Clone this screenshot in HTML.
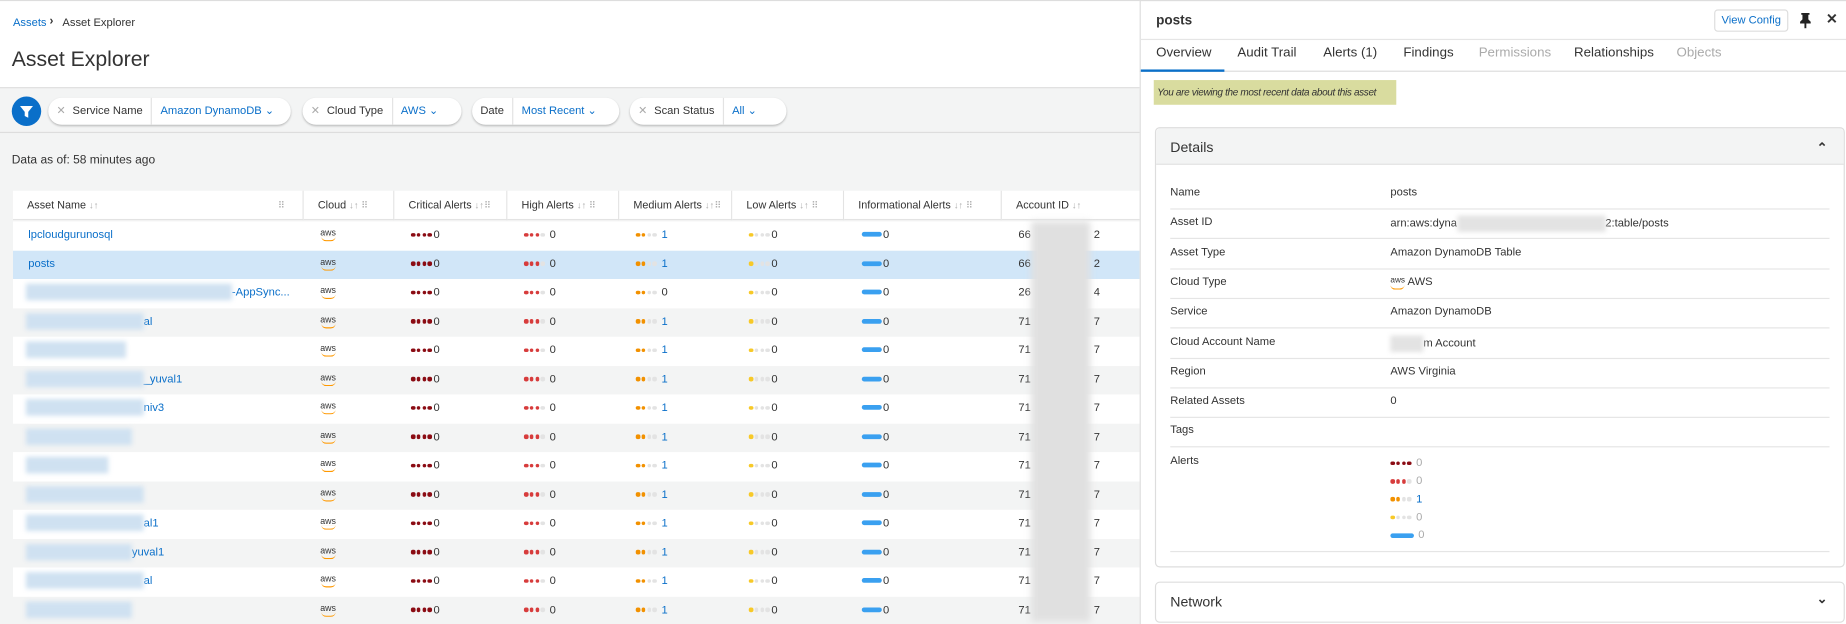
<!DOCTYPE html>
<html><head><meta charset="utf-8"><style>
*{box-sizing:border-box;margin:0;padding:0}
html,body{width:1846px;height:624px;overflow:hidden}
body{font-family:"Liberation Sans",sans-serif;font-size:11px;color:#333;background:#fff;position:relative}
#w{position:absolute;left:0;top:0;width:1568px;height:530px;transform:scale(1.17730);transform-origin:0 0;white-space:nowrap}
.a{position:absolute}
.blue{color:#0a6fc9}
.lp{position:absolute;left:0;top:0;width:968px;height:530px;background:#f3f4f4;border-top:1px solid #ddd}
.hdr{position:absolute;left:0;top:1px;width:968px;height:74px;background:#fff;border-bottom:1px solid #ddd}
.pill{position:absolute;top:83px;height:23px;background:#fff;border-radius:12px;box-shadow:0 1px 2px rgba(0,0,0,.25);display:flex;align-items:center;font-size:9.5px;white-space:nowrap;overflow:hidden}
.pill span{padding:0 7px;height:23px;line-height:23px;white-space:nowrap}
.pill .v{color:#0a6fc9;border-left:1px solid #e3e3e3}
.pill .x{color:#aaa;margin-right:3px;font-style:normal}
.tbl{position:absolute;left:11px;top:162px;width:957px}
.th{position:absolute;top:0;height:25px;line-height:25px;font-size:9.2px;background:#fff;border-right:1px solid #e3e3e3;border-bottom:1px solid #e3e3e3;padding-left:12px;color:#333;white-space:nowrap;overflow:hidden}
.th i{color:#aaa;font-style:normal;font-size:8px}
.row{position:absolute;left:0;width:957px;height:24.5px}
.c{position:absolute;top:0;line-height:24.5px;font-size:9.5px;white-space:nowrap}
.dots b{display:inline-block;width:3.5px;height:3.5px;border-radius:50%;margin-right:1.3px;vertical-align:middle}
.bar{display:inline-block;width:17px;height:4px;border-radius:2px;background:#3aa0f0;vertical-align:middle;margin-right:1px}
.aws{font-size:7.5px;color:#333;line-height:8px;display:inline-block;text-align:center;position:relative;top:-2px}
.aws:after{content:"";display:block;width:12px;height:3px;border-bottom:1.5px solid #f90;border-radius:0 0 8px 8px;margin:-1px auto 0}
.blur{display:inline-block;background:#cfe1f1;filter:blur(2px);vertical-align:middle}
.rp{position:absolute;left:968px;top:0;width:600px;height:530px;background:#fff;border-left:1px solid #ddd;border-top:1px solid #ddd}
.tab{position:absolute;top:39px;font-size:11.3px;color:#333}
.dl{position:absolute;left:1181px;font-size:9.5px;white-space:nowrap}
.dk{position:absolute;left:994px;font-size:9.5px}
.ln{position:absolute;left:994px;width:560px;height:1px;background:#e5e5e5}
</style></head><body><div id="w">
<div class="lp"></div>
<div class="hdr"></div>
<div class="a blue" style="left:11px;top:14px;font-size:9.5px">Assets</div>
<div class="a" style="left:42px;top:13px;font-size:10px;font-weight:bold">›</div>
<div class="a" style="left:53px;top:14px;font-size:9.5px">Asset Explorer</div>
<div class="a" style="left:10px;top:40px;font-size:18px;color:#333">Asset Explorer</div>
<div class="a" style="left:10px;top:82px;width:25px;height:25px;border-radius:50%;background:#0a6fc9"><svg width="25" height="25"><path d="M7 8h11l-4 5v5l-3-1.5v-3.5z" fill="#fff"/></svg></div>
<div class="pill" style="left:41px;width:206px"><span><i class="x">✕</i> Service Name</span><span class="v">Amazon DynamoDB ⌄</span></div>
<div class="pill" style="left:257px;width:135px"><span><i class="x">✕</i> Cloud Type</span><span class="v">AWS ⌄</span></div>
<div class="pill" style="left:401px;width:125px"><span>Date</span><span class="v">Most Recent ⌄</span></div>
<div class="pill" style="left:535px;width:133px"><span><i class="x">✕</i> Scan Status</span><span class="v">All ⌄</span></div>
<div class="a" style="left:0;top:112px;width:968px;height:1px;background:#ddd"></div>
<div class="a" style="left:10px;top:131px;font-size:10.2px">Data as of: 58 minutes ago</div>

<div class="tbl">
<div class="th" style="left:0;width:247px">Asset Name <i>↓↑</i><i style="position:absolute;left:225px">⠿</i></div>
<div class="th" style="left:247px;width:77px">Cloud <i>↓↑ ⠿</i></div>
<div class="th" style="left:324px;width:96px">Critical Alerts <i>↓↑⠿</i></div>
<div class="th" style="left:420px;width:95px">High Alerts <i>↓↑ ⠿</i></div>
<div class="th" style="left:515px;width:96px">Medium Alerts <i>↓↑⠿</i></div>
<div class="th" style="left:611px;width:95px">Low Alerts <i>↓↑ ⠿</i></div>
<div class="th" style="left:706px;width:134px">Informational Alerts <i>↓↑ ⠿</i></div>
<div class="th" style="left:840px;width:117px;border-right:none">Account ID <i>↓↑</i></div>
</div>
<div id="rows" class="a" style="left:11px;top:188px;width:957px;height:342px;overflow:hidden"></div>
<div class="a" style="left:876px;top:188px;width:50px;height:340px;background:#e0e0e0;filter:blur(3px)"></div>

<div class="rp"></div>
<div class="a" style="left:982px;top:12px;font-size:11.5px;font-weight:bold;color:#333">posts</div>
<div class="a blue" style="left:1456px;top:8px;width:63px;height:19px;border:1px solid #ddd;border-radius:3px;font-size:9.5px;line-height:17px;text-align:center">View Config</div>
<div class="a" style="left:1528px;top:10px"><svg width="11" height="14"><path d="M2 1h7v1.5H8v4l2 2v1.5H6.3v4.5L5.5 14 4.7 14.5V10H1V8.5l2-2v-4H2z" fill="#222"/></svg></div>
<div class="a" style="left:1551px;top:9px;font-size:12px;font-weight:bold">✕</div>
<div class="a" style="left:968px;top:33px;width:600px;height:1px;background:#e5e5e5"></div>
<div class="tab" style="left:982px">Overview</div>
<div class="tab" style="left:1051px">Audit Trail</div>
<div class="tab" style="left:1124px">Alerts (1)</div>
<div class="tab" style="left:1192px">Findings</div>
<div class="tab" style="left:1256px;color:#aaa">Permissions</div>
<div class="tab" style="left:1337px">Relationships</div>
<div class="tab" style="left:1424px;color:#aaa">Objects</div>
<div class="a" style="left:968px;top:60px;width:600px;height:1px;background:#ddd"></div>
<div class="a" style="left:969px;top:59px;width:71px;height:2px;background:#0a6fc9"></div>
<div class="a" style="left:980px;top:68px;width:206px;height:21px;background:#d9dc9f;font-size:8.5px;font-style:italic;line-height:21px;padding-left:3px;letter-spacing:-.3px;white-space:nowrap;overflow:hidden">You are viewing the most recent data about this asset</div>
<div class="a" style="left:981px;top:108px;width:586px;height:374px;border:1px solid #ddd;border-radius:4px"></div>
<div class="a" style="left:982px;top:109px;width:584px;height:31px;background:#f3f4f4;border-bottom:1px solid #ddd;border-radius:4px 4px 0 0"></div>
<div class="a" style="left:994px;top:118px;font-size:12px">Details</div>
<div class="a" style="left:1543px;top:119px;font-size:11px;font-weight:bold">⌃</div>
<div id="det"></div>
<div class="a" style="left:981px;top:494px;width:586px;height:35px;border:1px solid #ddd;border-radius:4px"></div>
<div class="a" style="left:994px;top:504px;font-size:12px">Network</div>
<div class="a" style="left:1543px;top:502px;font-size:11px;font-weight:bold">⌄</div>
</div>
<script>
function dots(cols,n){let s='<span class="dots">';for(let i=0;i<4;i++)s+='<b style="background:'+(i<n?cols:'#e3e3e3')+'"></b>';return s+'</span>';}
const names=[['lpcloudgurunosql',0],['posts',0],['-AppSync...',175],['al',100],['',85],['_yuval1',100],['niv3',100],['',90],['',70],['',100],['al1',100],['yuval1',90],['al',100],['',90]];
const acc=['66','66','26','71','71','71','71','71','71','71','71','71','71','71'];
let h='';
names.forEach((n,i)=>{const bg=i==1?'#d1e6f8':(i%2==1?'#f3f4f4':'#fff');
const med=i==2?'0':'1';
h+='<div class="row" style="top:'+(i*24.5)+'px;background:'+bg+'">'+
'<div class="c blue" style="left:'+(n[1]?11:13)+'px">'+(n[1]?'<span class="blur" style="width:'+n[1]+'px;height:14px"></span>':'')+n[0]+'</div>'+
'<div class="c" style="left:261px"><span class="aws">aws</span></div>'+
'<div class="c" style="left:338px">'+dots('#8b0c14',4)+'0</div>'+
'<div class="c" style="left:434px">'+dots('#d73c3c',3)+' 0</div>'+
'<div class="c" style="left:529px">'+dots('#f29100',2)+' <span class="'+(med=='1'?'blue':'')+'">'+med+'</span></div>'+
'<div class="c" style="left:625px">'+dots('#f7c928',1)+'0</div>'+
'<div class="c" style="left:721px"><span class="bar"></span>0</div>'+
'<div class="c" style="left:854px">'+acc[i]+'</div>'+
'<div class="c" style="left:918px">'+(i<3?(i==2?'4':'2'):'7')+'</div></div>';});
document.getElementById('rows').innerHTML=h;
const det=[['Name','posts'],['Asset ID','arn:aws:dyna<span class="blur" style="width:126px;height:14px;background:#e3e3e3"></span>2:table/posts'],['Asset Type','Amazon DynamoDB Table'],['Cloud Type','<span class="aws" style="font-size:7px">aws</span> AWS'],['Service','Amazon DynamoDB'],['Cloud Account Name','<span class="blur" style="width:28px;height:14px;background:#e3e3e3"></span>m Account'],['Region','AWS Virginia'],['Related Assets','0'],['Tags',''],['Alerts','']];
let d='';det.forEach((r,i)=>{const y=158+i*25.3;d+='<div class="dk" style="top:'+y+'px">'+r[0]+'</div><div class="dl" style="top:'+y+'px">'+r[1]+'</div>';if(i<9)d+='<div class="ln" style="top:'+(y+19)+'px"></div>';});
const al=[[dots('#8b0c14',4),'0'],[dots('#d73c3c',3),'0'],[dots('#f29100',2),'1'],[dots('#f7c928',1),'0'],['<span class="bar" style="width:20px"></span>','0']];
al.forEach((a,i)=>{d+='<div class="dl" style="top:'+(388+i*15.3)+'px">'+a[0]+' <span style="color:'+(a[1]=='1'?'#0a6fc9':'#aaa')+'">'+a[1]+'</span></div>';});
d+='<div class="ln" style="top:468px"></div>';
const w=document.getElementById('w');const t=document.createElement('div');t.innerHTML=d;while(t.firstChild)w.appendChild(t.firstChild);
</script>
</body></html>
